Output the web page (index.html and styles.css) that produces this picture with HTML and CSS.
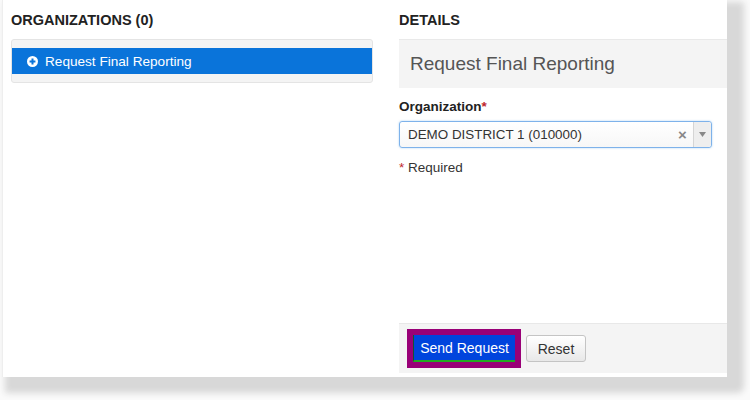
FILE: index.html
```html
<!DOCTYPE html>
<html>

<head>
    <meta charset="UTF-8">
    <title>Request Final Reporting</title>
    <link rel="stylesheet" href="styles.css">
</head>

<body>
    <div class="frame">
        <div class="screen">
            <div class="column orgs">
                <h3>Organizations (0)</h3>
                <div class="org-list">
                    <div class="org-item active">
                        <svg class="plus" width="11" height="11" viewBox="0 0 12 12">
                            <circle cx="6" cy="6" r="6" fill="#ffffff"/>
                            <path d="M6 2.8v6.4M2.8 6h6.4" stroke="#0a74da" stroke-width="2.2"/>
                        </svg>
                        Request Final Reporting
                    </div>
                </div>
            </div>

            <div class="column details">
                <h3>Details</h3>
                <div class="panel-heading">Request Final Reporting</div>

                <div class="form">
                    <label class="field-label">Organization<span class="req">*</span></label>
                    <div class="select">
                        <span class="select-value">DEMO DISTRICT 1 (010000)</span>
                        <span class="select-clear">&times;</span>
                        <span class="select-arrow">
                            <svg width="7" height="5" viewBox="0 0 7 5"><path d="M0 0h7L3.5 5z" fill="#888888"/></svg>
                        </span>
                    </div>
                    <p class="required-note"><span class="req">*</span> Required</p>
                </div>

                <div class="footer">
                    <div class="highlight">
                        <button class="btn btn-primary">Send Request</button>
                    </div>
                    <button class="btn btn-default">Reset</button>
                </div>
            </div>
        </div>
    </div>
</body>

</html>
```

FILE: styles.css
```css
* {
    box-sizing: border-box;
}

html,
body {
    height: 100%;
}

body {
    margin: 0;
    padding: 0 0 0 2px;
    background-color: #fafafa;
    font-family: 'Liberation Sans', Arial, sans-serif;
    font-size: 13px;
    color: #333333;
}

.frame {
    width: 725px;
    height: 377px;
    box-shadow: 10px 9px 6px 7px #d8d8d8;
    border-bottom-right-radius: 2px;
}

.screen {
    display: flex;
    width: 100%;
    height: 100%;
    background-color: #ffffff;
    border-left: 1px solid #eeeeee;
    overflow: hidden;
}

h3 {
    margin: 0;
    padding: 11px 0 10px;
    font-size: 14.5px;
    font-weight: bold;
    text-transform: uppercase;
    color: #222222;
    line-height: 18px;
}

.column {
    display: flex;
    flex-direction: column;
}

.orgs {
    width: 362px;
    margin-left: 8px;
}

.details {
    flex: 1;
    margin-left: 26px;
    min-width: 0;
}

.org-list {
    background-color: #f4f4f4;
    border: 1px solid #e4e4e4;
    border-radius: 3px;
    padding: 8px 0;
}

.org-item {
    display: flex;
    align-items: center;
    height: 26px;
    padding-left: 15px;
    background-color: #0a74da;
    color: #ffffff;
    font-size: 13.6px;
}

.plus {
    margin-right: 7px;
}

.panel-heading {
    height: 49px;
    padding: 13px 11px;
    background-color: #f4f4f4;
    border-top: 1px solid #e9e9e9;
    font-size: 19px;
    color: #555555;
    line-height: 22px;
    white-space: nowrap;
}

.form {
    padding-top: 11px;
}

.field-label {
    display: block;
    font-weight: bold;
    font-size: 13.5px;
    color: #222222;
    margin-bottom: 7px;
}

.req {
    color: #c0282d;
}

.select {
    display: flex;
    align-items: center;
    width: 313px;
    height: 27px;
    border: 1px solid #7eb2ea;
    border-radius: 3px;
    box-shadow: 0 0 2px rgba(102, 175, 233, 0.6);
    background: linear-gradient(#ffffff, #f7f7f7);
    font-size: 13.4px;
}

.select-value {
    flex: 1;
    padding-left: 8px;
    color: #333333;
}

.select-clear {
    width: 15px;
    font-size: 15px;
    font-weight: bold;
    color: #888888;
}

.select-arrow {
    display: flex;
    align-items: center;
    justify-content: center;
    width: 18px;
    height: 100%;
    border-left: 1px solid #d5d5d5;
    background-color: #eeeeee;
    border-radius: 0 3px 3px 0;
}

.required-note {
    margin: 12px 0 0;
    font-size: 13.5px;
    color: #333333;
}

.footer {
    display: flex;
    align-items: center;
    margin-top: auto;
    margin-bottom: 4px;
    height: 50px;
    padding-left: 8px;
    background-color: #f4f4f4;
    border-top: 1px solid #e8e8e8;
}

.highlight {
    padding: 6px;
    background-color: #990077;
}

.btn {
    font-family: 'Liberation Sans', Arial, sans-serif;
    font-size: 14px;
    height: 27px;
    padding: 0;
    white-space: nowrap;
    cursor: pointer;
}

.btn-primary {
    width: 102px;
    color: #ffffff;
    background-color: #0044dd;
    border: none;
    border-left: 1px solid #115533;
    border-bottom: 2px solid #22aa22;
}

.btn-default {
    margin-left: 5px;
    width: 60px;
    color: #333333;
    background: linear-gradient(#ffffff, #e8e8e8);
    border: 1px solid #c4c4c4;
    border-radius: 3px;
}
```
